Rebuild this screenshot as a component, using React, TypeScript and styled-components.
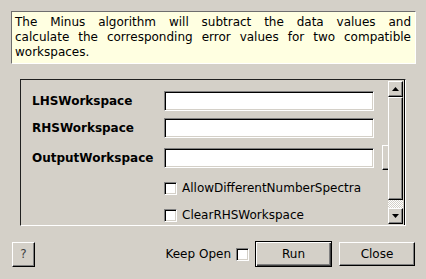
import React from "react";
import styled, { createGlobalStyle } from "styled-components";

const Global = createGlobalStyle`
  html, body {
    margin: 0;
    padding: 0;
    background: #d4d0c8;
    width: 426px;
    height: 279px;
    overflow: hidden;
  }
  * { box-sizing: border-box; }
  body {
    font-family: "DejaVu Sans", "Liberation Sans", sans-serif;
    font-size: 12px;
    color: #000;
  }
`;

const Dialog = styled.div`
  width: 426px;
  height: 279px;
  display: flex;
  flex-direction: column;
  padding-top: 11px;
`;

const Description = styled.div`
  margin-left: 11px;
  width: 405px;
  height: 53px;
  background: #ffffe1;
  border: 1px solid;
  border-color: #6e6e6e #ffffff #ffffff #6e6e6e;
  padding: 3px 4px 0 3px;
  line-height: 15px;
`;

const DescLine = styled.div<{ $justify?: boolean }>`
  text-align: ${(p) => (p.$justify ? "justify" : "left")};
  text-align-last: ${(p) => (p.$justify ? "justify" : "left")};
  white-space: nowrap;
`;

const Frame = styled.div`
  margin-top: 15px;
  margin-left: 20px;
  width: 386px;
  height: 147px;
  border: 1px solid;
  border-color: #202020 #ffffff #ffffff #202020;
  display: flex;
`;

const Content = styled.div`
  flex: 1;
  overflow: hidden;
  padding: 11px 0 0 11px;
  display: flex;
  flex-direction: column;
`;

const Row = styled.div<{ $h: number; $mt: number }>`
  display: flex;
  align-items: center;
  height: ${(p) => p.$h}px;
  margin-top: ${(p) => p.$mt}px;
  flex-shrink: 0;
`;

const Label = styled.div`
  flex: 0 0 132px;
  font-weight: bold;
  white-space: nowrap;
`;

const Input = styled.div`
  flex: 0 0 210px;
  height: 20px;
  background: #fff;
  border: 1px solid;
  border-color: #808080 #ffffff #ffffff #808080;
  box-shadow: inset 1px 1px 0 #000, inset -1px -1px 0 #d4d0c8;
`;

const BrowseButton = styled.div`
  margin-left: 8px;
  flex: 0 0 40px;
  height: 25px;
  border: 1px solid;
  border-color: #ffffff #000 #000 #ffffff;
  box-shadow: inset -1px -1px 0 #808080;
`;

const CheckSpacer = styled.div`
  flex: 0 0 132px;
`;

const CheckBox = styled.div`
  flex: 0 0 13px;
  width: 13px;
  height: 13px;
  background: #fff;
  border: 1px solid;
  border-color: #808080 #ffffff #ffffff #808080;
  box-shadow: inset 1px 1px 0 #000, inset -1px -1px 0 #d4d0c8;
`;

const CheckLabel = styled.span`
  margin-left: 5px;
  white-space: nowrap;
`;

const ScrollBar = styled.div`
  width: 17px;
  flex-shrink: 0;
  display: flex;
  flex-direction: column;
  padding: 1px 1px 1px 0;
  border-right: 1px solid #000;
`;

const ArrowButton = styled.div`
  height: 16px;
  flex-shrink: 0;
  display: flex;
  align-items: center;
  justify-content: center;
  background: #d4d0c8;
  border: 1px solid;
  border-color: #ffffff #000 #000 #ffffff;
  box-shadow: inset -1px -1px 0 #808080;
`;

const Thumb = styled.div`
  height: 103px;
  flex-shrink: 0;
  background: #d4d0c8;
  border: 1px solid;
  border-color: #ffffff #000 #000 #ffffff;
  box-shadow: inset -1px -1px 0 #808080;
`;

const Track = styled.div`
  flex: 1;
  background: repeating-conic-gradient(#ffffff 0 25%, #d4d0c8 0 50%) 0 0 / 2px 2px;
`;

const BottomBar = styled.div`
  margin-top: 15px;
  height: 26px;
  padding: 0 11px 0 12px;
  display: flex;
  align-items: center;
`;

const PushButton = styled.div<{ $w: number; $h: number; $default?: boolean }>`
  flex: 0 0 ${(p) => p.$w}px;
  height: ${(p) => p.$h}px;
  display: flex;
  align-items: center;
  justify-content: center;
  background: #d4d0c8;
  border: 1px solid;
  border-color: ${(p) => (p.$default ? "#000" : "#ffffff #000 #000 #ffffff")};
  box-shadow: ${(p) =>
    p.$default
      ? "inset 1px 1px 0 #ffffff, inset -1px -1px 0 #404040, inset -2px -2px 0 #808080"
      : "inset -1px -1px 0 #808080"};
`;

const HelpText = styled.span`
  color: #404040;
`;

const Spacer = styled.div<{ $w?: number }>`
  flex: ${(p) => (p.$w ? `0 0 ${p.$w}px` : "1")};
`;

const KeepOpen = styled.span`
  margin-right: 5px;
`;

const Arrow = ({ up }: { up?: boolean }) => (
  <svg width="7" height="4" viewBox="0 0 7 4">
    <polygon points={up ? "3.5,0 7,4 0,4" : "0,0 7,0 3.5,4"} fill="#000" />
  </svg>
);

export default function App() {
  return (
    <>
      <Global />
      <Dialog>
        <Description>
          <DescLine $justify>The Minus algorithm will subtract the data values and</DescLine>
          <DescLine $justify>calculate the corresponding error values for two compatible</DescLine>
          <DescLine>workspaces.</DescLine>
        </Description>
        <Frame>
          <Content>
            <Row $h={20} $mt={0}>
              <Label>LHSWorkspace</Label>
              <Input />
            </Row>
            <Row $h={20} $mt={7}>
              <Label>RHSWorkspace</Label>
              <Input />
            </Row>
            <Row $h={25} $mt={7}>
              <Label>OutputWorkspace</Label>
              <Input />
              <BrowseButton />
            </Row>
            <Row $h={20} $mt={8}>
              <CheckSpacer />
              <CheckBox />
              <CheckLabel>AllowDifferentNumberSpectra</CheckLabel>
            </Row>
            <Row $h={20} $mt={7}>
              <CheckSpacer />
              <CheckBox />
              <CheckLabel>ClearRHSWorkspace</CheckLabel>
            </Row>
          </Content>
          <ScrollBar>
            <ArrowButton>
              <Arrow up />
            </ArrowButton>
            <Thumb />
            <Track />
            <ArrowButton>
              <Arrow />
            </ArrowButton>
          </ScrollBar>
        </Frame>
        <BottomBar>
          <PushButton $w={23} $h={25}>
            <HelpText>?</HelpText>
          </PushButton>
          <Spacer />
          <KeepOpen>Keep Open</KeepOpen>
          <CheckBox />
          <Spacer $w={6} />
          <PushButton $w={77} $h={26} $default>
            Run
          </PushButton>
          <Spacer $w={7} />
          <PushButton $w={76} $h={24}>
            Close
          </PushButton>
        </BottomBar>
      </Dialog>
    </>
  );
}
